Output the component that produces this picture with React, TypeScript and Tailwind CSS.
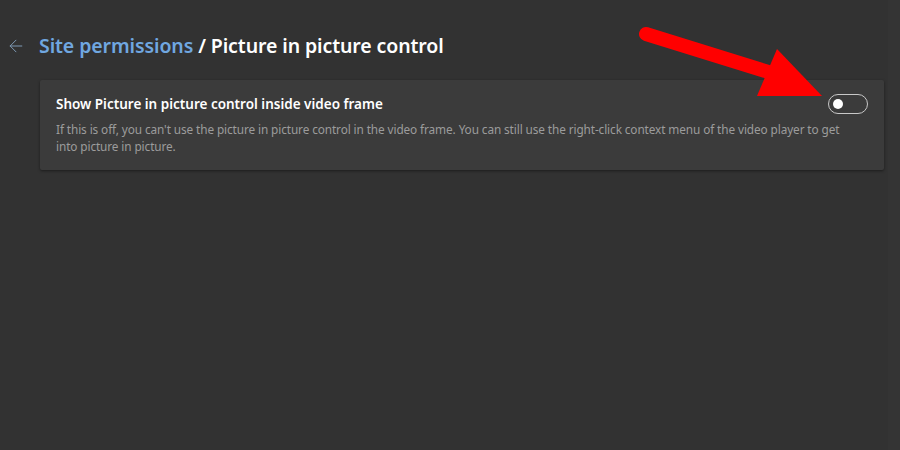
import { ArrowLeft } from "lucide-react";

const RedArrow = () => {
  return (
    <svg
      className="absolute left-0 top-0 pointer-events-none"
      width="900"
      height="450"
      viewBox="0 0 900 450"
    >
      <line
        x1="646"
        y1="34"
        x2="775"
        y2="74"
        stroke="#ff0000"
        strokeWidth="14"
        strokeLinecap="round"
      />
      <polygon points="777,49 757,96 822,96" fill="#ff0000" />
    </svg>
  );
};

const Toggle = () => {
  return (
    <button className="flex h-5 w-10 shrink-0 items-center rounded-full border border-[#c8c8c8] px-[4px]">
      <span className="h-[10px] w-[10px] rounded-full bg-white" />
    </button>
  );
};

export default function App() {
  return (
    <div
      className="relative flex h-[450px] w-[900px] overflow-hidden bg-[#323232]"
      style={{ fontFamily: '"Noto Sans", "Open Sans", sans-serif' }}
    >
      <div className="flex flex-1 flex-col pl-[6px] pr-[4px] pt-[32px]">
        <div className="flex items-center gap-[13px]">
          <ArrowLeft className="h-[20px] w-[20px] text-[#7d98b3]" strokeWidth={1.2} />
          <h1 className="text-[19.5px] font-semibold leading-[28px] tracking-[-0.1px] text-white">
            <span className="text-[#70a7e0]">Site permissions</span> / Picture in picture control
          </h1>
        </div>

        <div className="ml-[34px] mt-[20px] flex flex-col rounded-[2px] bg-[#3b3b3b] pb-[15px] pl-[16px] pr-[16px] pt-[14px] shadow-[0_1px_3px_rgba(0,0,0,0.45)]">
          <div className="flex items-center justify-between">
            <p className="text-[13.5px] font-semibold leading-[20px] text-white">
              Show Picture in picture control inside video frame
            </p>
            <Toggle />
          </div>
          <p className="mt-[7px] max-w-[800px] text-[11.8px] leading-[17px] tracking-[-0.1px] text-[#9c9c9c]">
            If this is off, you can't use the picture in picture control in the video frame. You can still use the right-click context menu of the video player to get into picture in picture.
          </p>
        </div>
      </div>
      <div className="w-[12px] bg-[#343434]" />
      <RedArrow />
    </div>
  );
}
